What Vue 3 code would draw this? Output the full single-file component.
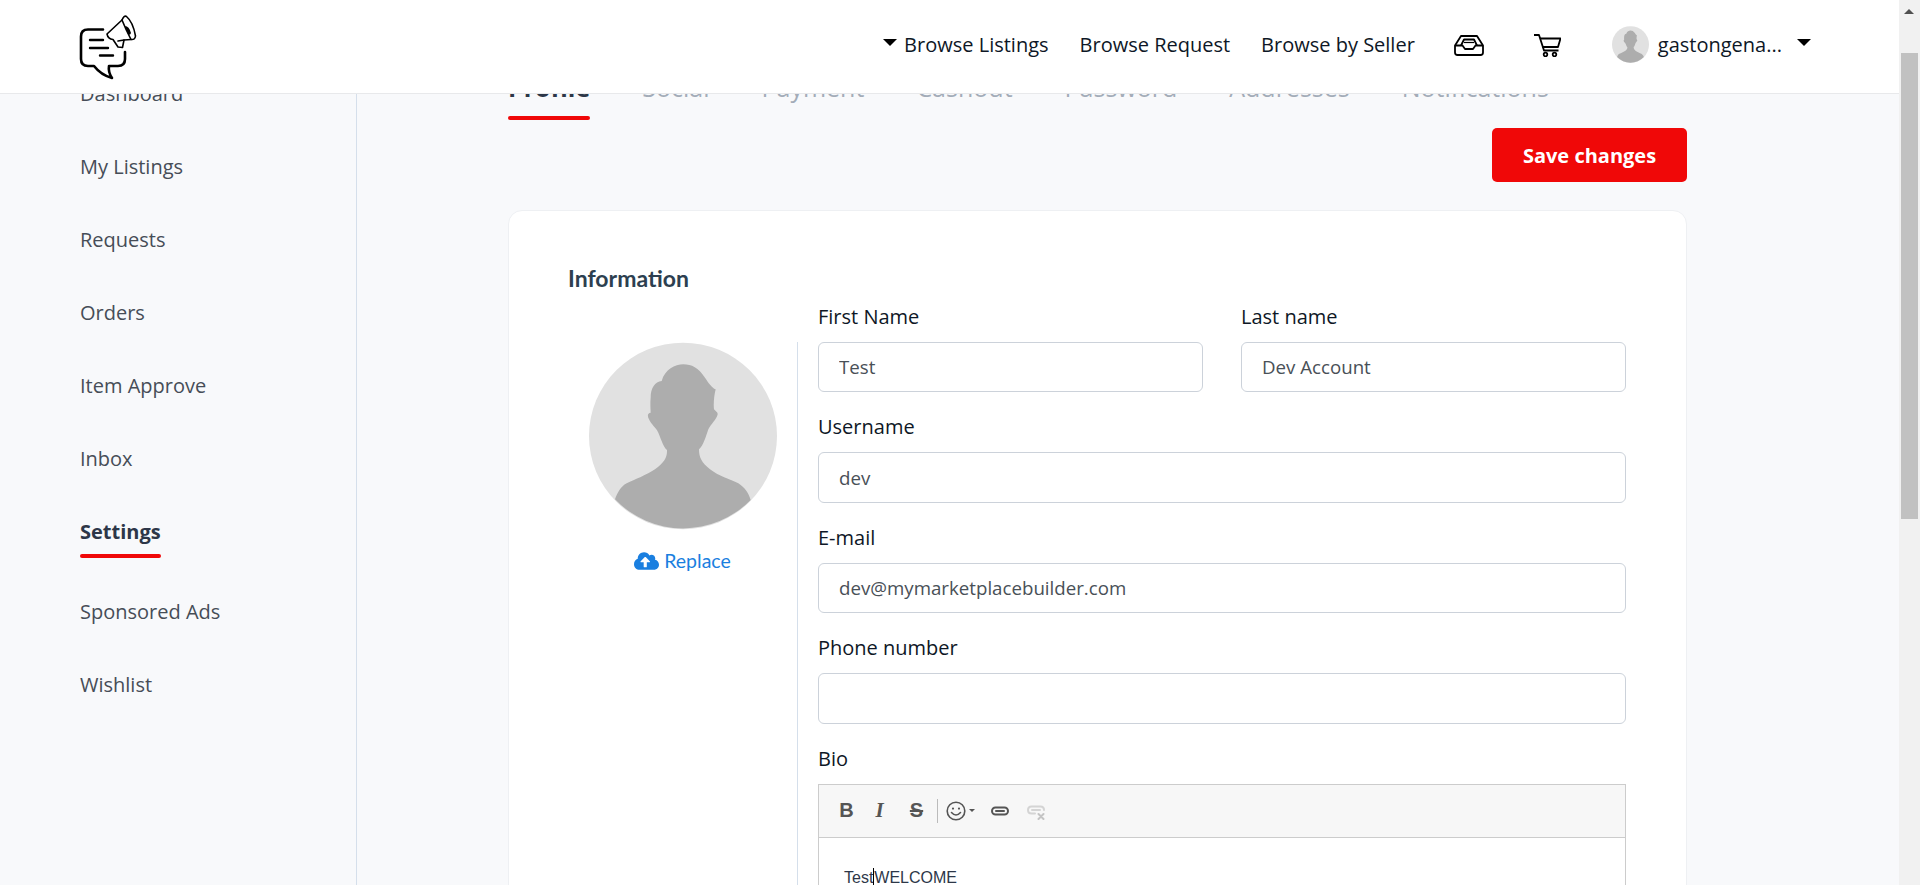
<script setup>
// sidebar and tab entries for the settings page
const sideLinks = ['Dashboard', 'My Listings', 'Requests', 'Orders', 'Item Approve', 'Inbox', 'Settings', 'Sponsored Ads', 'Wishlist'];
const tabs = ['Profile', 'Social', 'Payment', 'Cashout', 'Password', 'Addresses', 'Notifications'];

// silhouette shared by the big avatar and the one in the header
const person = 'M370 105C345 105 315 120 305 155C285 158 272 175 272 205C270 225 272 240 272 250C262 250 262 262 267 270C273 285 288 295 295 310C305 335 312 355 321 362C322 385 312 400 285 420C260 437 225 450 200 462C182 472 172 490 165 510A282 280 0 0 0 572 512C565 490 555 475 535 462C510 450 475 440 450 420C425 400 417 385 417 360C430 350 438 320 445 300C452 285 470 270 473 255C474 248 465 245 462 240C460 225 462 200 467 180C455 175 445 160 435 145C415 115 395 105 370 105Z';
</script>

<template>
  <div class="page">
    <header class="topbar">
      <svg class="logo" viewBox="78 13 60 66" width="60" height="66" fill="none" stroke="#000" stroke-linecap="round" stroke-linejoin="round">
        <path stroke-width="2.6" d="M103 28.500H88Q81 28.500 81 35.500V58Q81 65 88 65H94Q101 74 112 77Q108 71 109 65H118Q125 65 125 58V51" />
        <path stroke-width="2.4" d="M90 39H103M90 47H108M100 54.500H113" />
        <path stroke-width="1.600" d="M107 33L122 19Q124 14 126.500 15.500Q133 21 135.500 35Q135 39 131 38.500L124 39L122.500 46.500L118 46L113 38.500Q108 38 107 33Z" />
        <path stroke-width="1.600" d="M122 19Q126 29 131 38.500M118 40L124 39" />
        <path fill="#000" stroke="none" d="M125 25Q129 25 131 32Q130 35 128 33Z" />
      </svg>

      <nav class="topnav">
        <a class="navlink with-caret"><span class="caret"></span>Browse Listings</a>
        <a class="navlink">Browse Request</a>
        <a class="navlink">Browse by Seller</a>
        <svg class="inbox-icon" viewBox="0 0 30 21" width="30" height="21" fill="none" stroke="#000" stroke-width="1.800" stroke-linejoin="round">
          <path d="M7 1H23L29 10.500V17.500Q29 20 26.500 20H3.500Q1 20 1 17.500V10.500Z" />
          <path d="M1 10.500H8.500L11 14H19L21.500 10.500H29" />
          <path d="M7 10.500L10 4.500H20L23 10.500" />
          <path stroke-width="1.200" d="M10 7.500H20" />
        </svg>
        <svg class="cart-icon" viewBox="0 0 27 23" width="27" height="23" fill="none" stroke="#000" stroke-width="1.800" stroke-linejoin="round">
          <path d="M0 1H5L10 16.500H24.500" />
          <path d="M6 4.500H26.500L24 13H8.500" />
          <circle cx="11.500" cy="20.500" r="1.800" />
          <circle cx="20.500" cy="20.500" r="1.800" />
        </svg>
        <div class="user">
          <svg class="user-pic" viewBox="87 40 564 560" width="37" height="37">
            <ellipse cx="369" cy="320" rx="282" ry="280" fill="#e1e1e1" />
            <path :d="person" fill="#adadad" />
          </svg>
          <span class="user-name">gastongena...</span>
          <span class="caret user-caret"></span>
        </div>
      </nav>
    </header>

    <div class="layout">
      <aside class="sidebar">
        <a v-for="link in sideLinks" :key="link" class="sidelink" :class="{ active: link === 'Settings' }">
          <span>{{ link }}</span>
        </a>
      </aside>

      <main class="content">
        <div class="tabs">
          <a v-for="tab in tabs" :key="tab" class="tab" :class="{ active: tab === 'Profile' }">{{ tab }}</a>
        </div>
        <div class="actions">
          <button class="save-btn">Save changes</button>
        </div>

        <section class="card">
          <h2 class="card-title">Information</h2>
          <div class="card-row">
            <div class="photo-col">
              <svg class="photo" viewBox="87 40 564 560" width="188" height="188">
                <ellipse cx="369" cy="320" rx="282" ry="280" fill="#e1e1e1" />
                <path :d="person" fill="#adadad" />
              </svg>
              <a class="replace">
                <svg viewBox="0 0 640 512" width="25" height="20" fill="#1a7fe0">
                  <path d="M537.600 226.600c4.100-10.700 6.400-22.400 6.400-34.600 0-53-43-96-96-96-19.700 0-38.100 6-53.300 16.200C367 64.200 315.300 32 256 32c-88.400 0-160 71.600-160 160 0 2.700.1 5.400.2 8.100C40.200 219.800 0 273.200 0 336c0 79.500 64.500 144 144 144h368c70.700 0 128-57.300 128-128 0-61.900-44-113.600-102.400-125.400zM393.400 288H328v112c0 8.800-7.200 16-16 16h-48c-8.800 0-16-7.200-16-16V288h-65.400c-14.300 0-21.400-17.200-11.300-27.300l105.400-105.400c6.200-6.200 16.400-6.200 22.600 0l105.400 105.400c10.100 10.100 2.900 27.300-11.300 27.300z" />
                </svg>
                Replace
              </a>
            </div>

            <div class="fields">
              <div class="field-pair">
                <div class="field">
                  <label>First Name</label>
                  <input type="text" value="Test" />
                </div>
                <div class="field">
                  <label>Last name</label>
                  <input type="text" value="Dev Account" />
                </div>
              </div>
              <div class="field">
                <label>Username</label>
                <input type="text" value="dev" />
              </div>
              <div class="field">
                <label>E-mail</label>
                <input type="text" value="dev@mymarketplacebuilder.com" />
              </div>
              <div class="field">
                <label>Phone number</label>
                <input type="text" value="" />
              </div>
              <div class="field">
                <label>Bio</label>
                <div class="editor">
                  <div class="toolbar">
                    <span class="tool tool-b">B</span>
                    <span class="tool tool-i">I</span>
                    <span class="tool tool-s">S</span>
                    <span class="tool-sep"></span>
                    <svg class="smile" viewBox="0 0 20 20" width="20" height="20" fill="none" stroke="#555" stroke-width="1.600" stroke-linecap="round">
                      <circle cx="10" cy="10" r="8.800" />
                      <path d="M5.500 11.500Q10 16.500 14.500 11.500" />
                      <path stroke-width="2.200" d="M7 7.500V7.600M13 7.500V7.600" />
                    </svg>
                    <span class="mini-caret"></span>
                    <svg class="chain" viewBox="0 0 18 10" width="18" height="10" fill="none" stroke="#555" stroke-width="2" stroke-linecap="round">
                      <rect x="1" y="1.500" width="16" height="7" rx="3.500" />
                      <path d="M5 5H13" />
                    </svg>
                    <svg class="unchain" viewBox="0 0 18 15" width="18" height="15" fill="none" stroke="#d4d4d4" stroke-width="2" stroke-linecap="round">
                      <path d="M8 8.500H4.500Q1 8.500 1 5Q1 1.500 4.500 1.500H13.500Q17 1.500 17 5" />
                      <path d="M5 5H13" />
                      <path stroke="#c4c4c4" d="M11.500 9L16.500 14M16.500 9L11.500 14" />
                    </svg>
                  </div>
                  <div class="editor-body">Test<span class="cursor"></span>WELCOME</div>
                </div>
              </div>
            </div>
          </div>
        </section>
      </main>
    </div>

    <!-- browser scrollbar as it appears in the screenshot -->
    <div class="scrollbar">
      <span class="scroll-arrow"></span>
      <span class="scroll-thumb"></span>
    </div>
  </div>
</template>

<style>
html,
body {
  margin: 0;
  overflow: hidden;
}
</style>

<style scoped>
.page {
  position: relative;
  width: 1920px;
  height: 885px;
  padding-right: 21px;
  box-sizing: border-box;
  overflow: hidden;
  background: #f8f9fb;
  font-family: "Open Sans", sans-serif;
  color: #2d3748;
}
.topbar {
  position: relative;
  z-index: 2;
  height: 94px;
  box-sizing: border-box;
  display: flex;
  align-items: flex-start;
  justify-content: space-between;
  padding: 14px 0 0 78px;
  background: #fff;
  border-bottom: 1px solid #e8e9eb;
}
.topnav {
  display: flex;
  align-items: center;
  height: 60px;
  padding-right: 88px;
  font-size: 20px;
  color: #0e1726;
}
.navlink {
  margin-right: 31px;
  line-height: 25px;
}
.with-caret {
  display: flex;
  align-items: center;
}
.caret {
  display: inline-block;
  width: 0;
  height: 0;
  border-left: 7px solid transparent;
  border-right: 7px solid transparent;
  border-top: 7px solid #000;
}
.with-caret .caret {
  margin-right: 7px;
  margin-top: -3px;
}
.inbox-icon {
  margin: 3px 50px 0 8px;
}
.cart-icon {
  margin: 3px 51px 0 0;
}
.user {
  display: flex;
  align-items: center;
}
.user-pic {
  margin-right: 9px;
}
.user-caret {
  margin-left: 15px;
  margin-top: -3px;
}
.layout {
  display: flex;
  height: 791px;
}
.sidebar {
  width: 357px;
  flex-shrink: 0;
  box-sizing: border-box;
  padding-left: 80px;
  border-right: 1px solid #d5dfeb;
  font-size: 20px;
  color: #464d57;
}
.sidelink {
  display: block;
  padding: 24px 0;
  line-height: 25px;
}
.sidelink:first-child {
  margin-top: -37.500px;
}
.sidelink span {
  display: inline-block;
}
.sidelink.active {
  padding-bottom: 31px;
  font-weight: 700;
  color: #2d3748;
}
.sidelink.active span {
  position: relative;
}
.sidelink.active span::after {
  content: "";
  position: absolute;
  left: 0;
  right: 0;
  bottom: -14px;
  height: 4px;
  border-radius: 2px;
  background: #f00808;
}
.content {
  flex: 1;
  padding: 0 212px 0 151px;
  min-width: 0;
}
.tabs {
  display: flex;
  gap: 52px;
  margin-top: -22px;
  font-size: 25px;
  line-height: 30px;
  color: #a3acb8;
}
.tab {
  position: relative;
  padding-bottom: 18px;
}
.tab.active {
  font-weight: 700;
  color: #2d3748;
}
.tab.active::after {
  content: "";
  position: absolute;
  left: 0;
  right: 0;
  bottom: 0;
  height: 4px;
  border-radius: 2px;
  background: #f00808;
}
.actions {
  display: flex;
  justify-content: flex-end;
  margin-top: 8px;
}
.save-btn {
  width: 195px;
  height: 54px;
  border: none;
  border-radius: 5px;
  background: #f00808;
  color: #fff;
  font-family: "Open Sans", sans-serif;
  font-size: 20px;
  font-weight: 700;
}
.card {
  margin-top: 27.500px;
  padding: 53px 60px 60px 59px;
  background: #fff;
  border-radius: 14px;
  border: 1px solid #eef0f3;
  box-sizing: border-box;
}
.card-title {
  margin: 0 0 12px;
  font-family: Lato, sans-serif;
  font-size: 23px;
  font-weight: 700;
  line-height: 28px;
  color: #2d3f50;
}
.card-row {
  display: flex;
}
.photo-col {
  width: 230px;
  flex-shrink: 0;
  box-sizing: border-box;
  margin-top: 38.500px;
  border-right: 1px solid #d5dfeb;
  display: flex;
  flex-direction: column;
  align-items: center;
}
.photo {
  display: block;
}
.replace {
  display: flex;
  align-items: center;
  gap: 5px;
  margin-top: 18px;
  font-family: Lato, sans-serif;
  font-size: 19.500px;
  line-height: 25px;
  color: #1a7fe0;
}
.fields {
  flex: 1;
  min-width: 0;
  padding-left: 20px;
}
.field-pair {
  display: flex;
  gap: 38px;
}
.field-pair .field {
  flex: 1;
}
.field {
  margin-bottom: 22px;
}
.field label {
  display: block;
  margin-bottom: 13px;
  font-size: 20px;
  line-height: 25px;
  color: #0e1726;
}
.field input {
  display: block;
  width: 100%;
  height: 50.500px;
  box-sizing: border-box;
  padding: 0 20px;
  border: 1px solid #ccd2da;
  border-radius: 6px;
  background: #fff;
  font-family: "Open Sans", sans-serif;
  font-size: 18.700px;
  color: #495057;
  outline: none;
}
.editor {
  border: 1px solid #ccc;
}
.toolbar {
  display: flex;
  align-items: center;
  height: 52px;
  background: #f7f7f7;
  border-bottom: 1px solid #ccc;
  color: #555;
}
.tool {
  width: 33px;
  text-align: center;
  font-weight: 700;
}
.tool-b {
  font-family: "Liberation Sans", sans-serif;
  font-size: 20px;
  margin-left: 11px;
}
.tool-i {
  font-family: "Liberation Serif", serif;
  font-size: 21px;
  font-style: italic;
}
.tool-s {
  font-family: "Liberation Sans", sans-serif;
  font-size: 20px;
  margin-left: 4px;
  text-decoration: line-through;
}
.tool-sep {
  width: 1px;
  height: 24px;
  margin: 0 8px 0 4px;
  background: #bbb;
}
.mini-caret {
  width: 0;
  height: 0;
  margin: 0 0 0 3px;
  border-left: 3px solid transparent;
  border-right: 3px solid transparent;
  border-top: 3px solid #555;
}
.chain {
  margin-left: 16px;
}
.unchain {
  margin: 4px 0 0 18px;
}
.editor-body {
  height: 300px;
  padding: 29px 25px;
  background: #fff;
  font-family: "Liberation Sans", sans-serif;
  font-size: 16px;
  line-height: 22px;
  color: #2d3748;
}
.cursor {
  display: inline-block;
  width: 1px;
  height: 18px;
  margin-bottom: -3px;
  background: #000;
}
.scrollbar {
  position: absolute;
  top: 0;
  right: 0;
  width: 21px;
  height: 885px;
  background: #f1f1f1;
}
.scroll-arrow {
  position: absolute;
  top: 9px;
  left: 5px;
  width: 0;
  height: 0;
  border-left: 5px solid transparent;
  border-right: 5px solid transparent;
  border-bottom: 5px solid #505050;
}
.scroll-thumb {
  position: absolute;
  top: 53px;
  left: 2px;
  width: 17px;
  height: 466px;
  background: #c1c1c1;
}
</style>
